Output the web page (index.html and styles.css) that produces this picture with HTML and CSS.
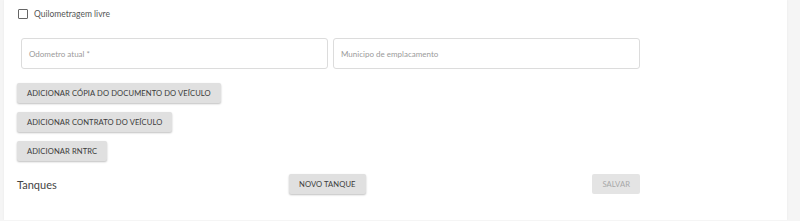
FILE: index.html
```html
<!DOCTYPE html>
<html lang="pt-BR">
<head>
<meta charset="utf-8">
<title>Veículo</title>
<link rel="stylesheet" href="styles.css">
</head>
<body>

<div class="card">
	<label class="check">
		<span class="check-box"></span>
		<span class="check-label">Quilometragem livre</span>
	</label>

	<div class="fields">
		<div class="field"><span class="placeholder">Odometro atual *</span></div>
		<div class="field"><span class="placeholder">Municipo de emplacamento</span></div>
	</div>

	<div class="actions">
		<button class="btn">Adicionar cópia do documento do veículo</button>
		<button class="btn">Adicionar contrato do veículo</button>
		<button class="btn">Adicionar RNTRC</button>
	</div>

	<div class="footer">
		<h3 class="title">Tanques</h3>
		<button class="btn">Novo tanque</button>
		<button class="btn btn-disabled" disabled>Salvar</button>
	</div>
</div>

</body>
</html>
```

FILE: styles.css
```css
html, body {
	margin: 0;
	background: #f5f5f5;
}

body {
	font-family: Lato, "Noto Sans", sans-serif;
	color: #444;
}

.card {
	background: #fff;
	margin-left: 4px;
	width: 783px;
	height: 220px;
	box-sizing: border-box;
	padding: 9px 0 0 13px;
	box-shadow: 0 0 2px rgba(0, 0, 0, .06);
}

.check {
	display: flex;
	align-items: center;
	height: 10px;
	margin-left: 1px;
}

	.check-box {
		width: 8px;
		height: 8px;
		border: 1.5px solid #666;
		border-radius: 1px;
	}

	.check-label {
		margin-left: 6px;
		font-size: 8.5px;
		color: #555;
	}

.fields {
	display: grid;
	grid-template-columns: 307px 307px;
	gap: 5px;
	margin: 19px 0 0 4px;
}

	.field {
		height: 31px;
		box-sizing: border-box;
		border: 1px solid #dcdcdc;
		border-radius: 3px;
		display: flex;
		align-items: center;
		padding-left: 7px;
	}

	.placeholder {
		font-size: 8px;
		color: #9a9a9a;
	}

.actions {
	display: flex;
	flex-direction: column;
	align-items: flex-start;
	gap: 9px;
	margin-top: 14px;
}

.btn {
	height: 20px;
	padding: 0 10px;
	border: 0;
	border-radius: 2px;
	background: #e0e0e0;
	box-shadow: 0 1px 2px rgba(0, 0, 0, .25);
	font: 7.6px Lato, "Noto Sans", sans-serif;
	text-transform: uppercase;
	color: #3a3a3a;
	letter-spacing: .1px;
}

.btn-disabled {
	background: #e4e4e4;
	color: #a8a8a8;
	box-shadow: none;
	padding: 0 10px;
}

.footer {
	display: grid;
	grid-template-columns: 272px auto 1fr;
	align-items: center;
	width: 623px;
	margin-top: 13px;
}

	.footer .btn:last-child {
		justify-self: end;
	}

.title {
	margin: 0;
	font-weight: normal;
	font-size: 11px;
	color: #444;
}
```
